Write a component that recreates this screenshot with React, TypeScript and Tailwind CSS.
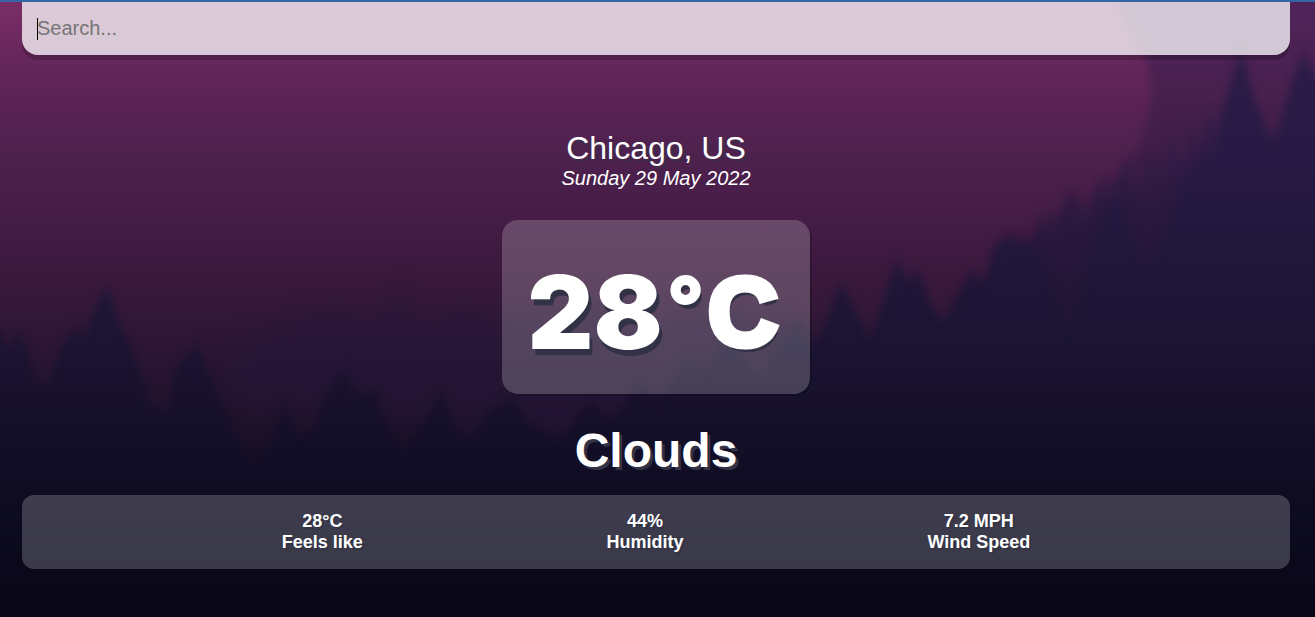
import React from "react";

const stats = [
  { value: "28°C", label: "Feels like" },
  { value: "44%", label: "Humidity" },
  { value: "7.2 MPH", label: "Wind Speed" },
];

function ForestBackdrop() {
  return (
    <svg
      aria-hidden="true"
      className="absolute inset-0 -z-10 h-full w-full"
      viewBox="0 0 1315 617"
      preserveAspectRatio="none"
    >
      <defs>
        <linearGradient id="sky" gradientUnits="userSpaceOnUse" x1="0" y1="0" x2="0" y2="617">
          <stop offset="0" stopColor="#7a2d66" />
          <stop offset="0.1" stopColor="#65275c" />
          <stop offset="0.16" stopColor="#5b2256" />
          <stop offset="0.23" stopColor="#50224f" />
          <stop offset="0.32" stopColor="#481e49" />
          <stop offset="0.42" stopColor="#3d193f" />
          <stop offset="0.5" stopColor="#341838" />
          <stop offset="0.6" stopColor="#281431" />
          <stop offset="0.7" stopColor="#1e112a" />
          <stop offset="0.8" stopColor="#100d22" />
          <stop offset="0.9" stopColor="#0b091c" />
          <stop offset="1" stopColor="#090716" />
        </linearGradient>
        <linearGradient id="dusk" gradientUnits="userSpaceOnUse" x1="0" y1="0" x2="0" y2="300">
          <stop offset="0" stopColor="#50245a" />
          <stop offset="0.3" stopColor="#49214f" />
          <stop offset="0.7" stopColor="#361b42" />
          <stop offset="1" stopColor="#291738" />
        </linearGradient>
        <linearGradient id="trees" gradientUnits="userSpaceOnUse" x1="0" y1="60" x2="0" y2="617">
          <stop offset="0" stopColor="#2b1c48" />
          <stop offset="0.2" stopColor="#271a44" />
          <stop offset="0.35" stopColor="#20173a" />
          <stop offset="0.5" stopColor="#1b1433" />
          <stop offset="0.62" stopColor="#17112b" />
          <stop offset="0.75" stopColor="#100d24" />
          <stop offset="0.88" stopColor="#0b091c" />
          <stop offset="1" stopColor="#090716" />
        </linearGradient>
        <filter id="soft" filterUnits="userSpaceOnUse" x="-60" y="-60" width="1435" height="760" colorInterpolationFilters="sRGB">
          <feGaussianBlur stdDeviation="4 6" />
        </filter>
        <filter id="softer" filterUnits="userSpaceOnUse" x="-60" y="-60" width="1435" height="760" colorInterpolationFilters="sRGB">
          <feGaussianBlur stdDeviation="12" />
        </filter>
      </defs>
      <rect width="1315" height="617" fill="url(#sky)" />
      <path
        filter="url(#soft)"
        fill="url(#dusk)"
        d="M1108 -20 L1122 15 L1138 40 L1148 62 L1152 90 L1146 122 L1137 150 L1124 158 L1118 178 L1100 175 L1088 205 L1070 188 L1060 212 L1042 212 L1030 238 L1010 236 L1000 262 L1040 320 L1380 320 L1380 -60 L1100 -60Z"
      />
      <path
        filter="url(#softer)"
        fill="#24163a"
        opacity="0.45"
        d="M230 345 L300 310 L345 300 L370 318 L402 280 L420 318 L460 300 L520 320 L600 300 L660 322 L720 300 L800 330 L860 420 L860 480 L700 430 L560 440 L420 420 L230 400Z"
      />
      <path
        filter="url(#soft)"
        fill="url(#trees)"
        opacity="0.5"
        d="M1000 262 L1015 230 L1026 250 L1042 222 L1052 240 L1069 190 L1082 222 L1098 182 L1110 200 L1125 158 L1138 190 L1152 145 L1162 178 L1170 126 L1182 165 L1190 118 L1200 150 L1206 105 L1222 140 L1222 300 L1160 330 L1000 330Z"
      />
      <path
        filter="url(#soft)"
        fill="url(#trees)"
        d="M-60 350 L0 328 L8 352 L18 328 L34 372 L45 390 L60 350 L74 326 L84 338 L96 306 L107 285 L118 320 L134 355 L150 400 L166 416 L176 370 L186 355 L198 342 L208 372 L222 405 L240 440 L256 465 L272 438 L286 402 L298 435 L314 430 L326 392 L345 366 L358 396 L376 388 L386 424 L402 450 L420 430 L441 390 L452 420 L468 442 L490 410 L512 396 L530 424 L560 440 L590 398 L612 420 L640 380 L660 400 L690 352 L702 376 L722 340 L734 320 L746 360 L762 376 L780 336 L798 320 L815 344 L828 318 L841 280 L852 304 L870 340 L880 310 L897 258 L908 282 L918 268 L930 302 L944 322 L958 292 L972 270 L984 282 L994 246 L1007 234 L1018 250 L1030 242 L1044 262 L1054 298 L1068 330 L1080 300 L1092 242 L1104 216 L1118 190 L1130 228 L1145 268 L1158 250 L1168 220 L1182 178 L1200 160 L1214 145 L1224 102 L1241 48 L1254 96 L1264 122 L1274 138 L1282 112 L1292 80 L1303 50 L1316 76 L1380 80 L1380 700 L-60 700Z"
      />
    </svg>
  );
}

export default function App() {
  return (
    <div className="relative isolate min-h-screen overflow-hidden border-t-2 border-[#3465a4] pr-[25px] pb-12 pl-[22px] font-['Liberation_Sans',Arial,sans-serif] text-white">
      <ForestBackdrop />
      <main>
        <form role="search" className="relative" onSubmit={(e) => e.preventDefault()}>
          <input
            type="text"
            aria-label="Search for a city"
            placeholder="Search..."
            autoFocus
            className="block h-[53px] w-full rounded-b-2xl bg-white/75 px-[15px] text-xl text-[#313131] caret-transparent shadow-[0_5px_0_rgba(0,0,0,0.2)] outline-none placeholder:text-[#757575]"
          />
          <span aria-hidden="true" className="pointer-events-none absolute top-4 left-[15px] h-[22px] w-px bg-black" />
        </form>

        <section className="mt-[75px] text-center">
          <h1 className="text-[32px] leading-9 font-medium [text-shadow:3px_3px_rgba(50,50,70,0.5)]">Chicago, US</h1>
          <p className="text-xl leading-6 italic">Sunday 29 May 2022</p>
        </section>

        <section className="mt-[30px] flex flex-col items-center">
          <div className="rounded-2xl bg-white/20 pt-5 pr-8 pb-[10px] pl-[25px] shadow-[2px_2px_0_rgba(0,0,0,0.2)]">
            <p className="flex h-36 items-start gap-1.5 text-[102px] leading-[144px] font-black [text-shadow:3px_6px_rgb(50,50,70)]">
              <span className="font-['Inter',sans-serif]">28</span>
              <span className="text-[84px] leading-[132px] [-webkit-text-stroke:4px_white]">°</span>
              <span className="text-8xl leading-[144px] [-webkit-text-stroke:7px_white]">C</span>
            </p>
          </div>
          <h2 className="mt-[30px] text-5xl leading-[54px] font-bold [text-shadow:3px_3px_rgb(50,50,70)]">Clouds</h2>
        </section>

        <dl className="mt-[17px] flex justify-evenly rounded-xl bg-white/20 p-4 text-center text-lg leading-[21px] font-bold [text-shadow:2px_2px_rgba(50,50,70,0.9)]">
          {stats.map((s) => (
            <div key={s.label} className="flex flex-col-reverse">
              <dt>{s.label}</dt>
              <dd>{s.value}</dd>
            </div>
          ))}
        </dl>
      </main>
    </div>
  );
}
